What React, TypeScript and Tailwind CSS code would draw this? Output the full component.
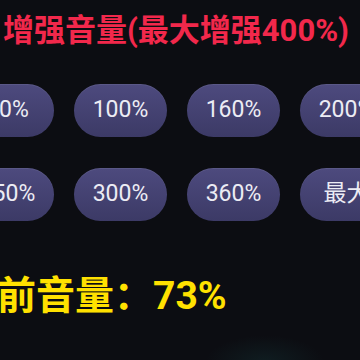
import React from 'react';

const rows = [
  ['50%', '100%', '160%', '200%'],
  ['250%', '300%', '360%', '最大'],
];

const App: React.FC = () => {
  return (
    <div
      className="relative w-[360px] h-[360px] overflow-hidden bg-[#0c0d12]"
      style={{ fontFamily: 'Roboto, "Noto Sans CJK SC", sans-serif' }}
    >
      {/* Title */}
      <div className="pl-[3px] pt-[12px] text-[31px] leading-[38px] font-bold text-[#f2284b] whitespace-nowrap">
        增强音量(最大增强400%)
      </div>

      {/* Boost buttons */}
      <div className="mt-[34px] -ml-[39px] flex flex-col gap-[31px]">
        {rows.map((row, i) => (
          <div key={i} className="flex gap-[20px]">
            {row.map((label) => (
              <button
                key={label}
                className="w-[93px] h-[53px] shrink-0 rounded-full bg-gradient-to-b from-[#4d4a7e] to-[#3c3a66] text-[#ececf4] text-[23px] flex items-center justify-center shadow-[inset_0_1px_0_rgba(255,255,255,0.08)]"
              >
                {label}
              </button>
            ))}
          </div>
        ))}
      </div>

      {/* Current volume */}
      <div className="mt-[52px] -ml-[42px] text-[39px] leading-[46px] font-bold text-[#ffe100] whitespace-nowrap">
        当前音量：73%
      </div>

      {/* bottom glow */}
      <div className="absolute left-[205px] bottom-[-30px] w-[120px] h-[55px] rounded-full bg-[radial-gradient(ellipse_at_center,rgba(30,100,100,0.18),transparent_70%)]" />
    </div>
  );
};

export default App;
